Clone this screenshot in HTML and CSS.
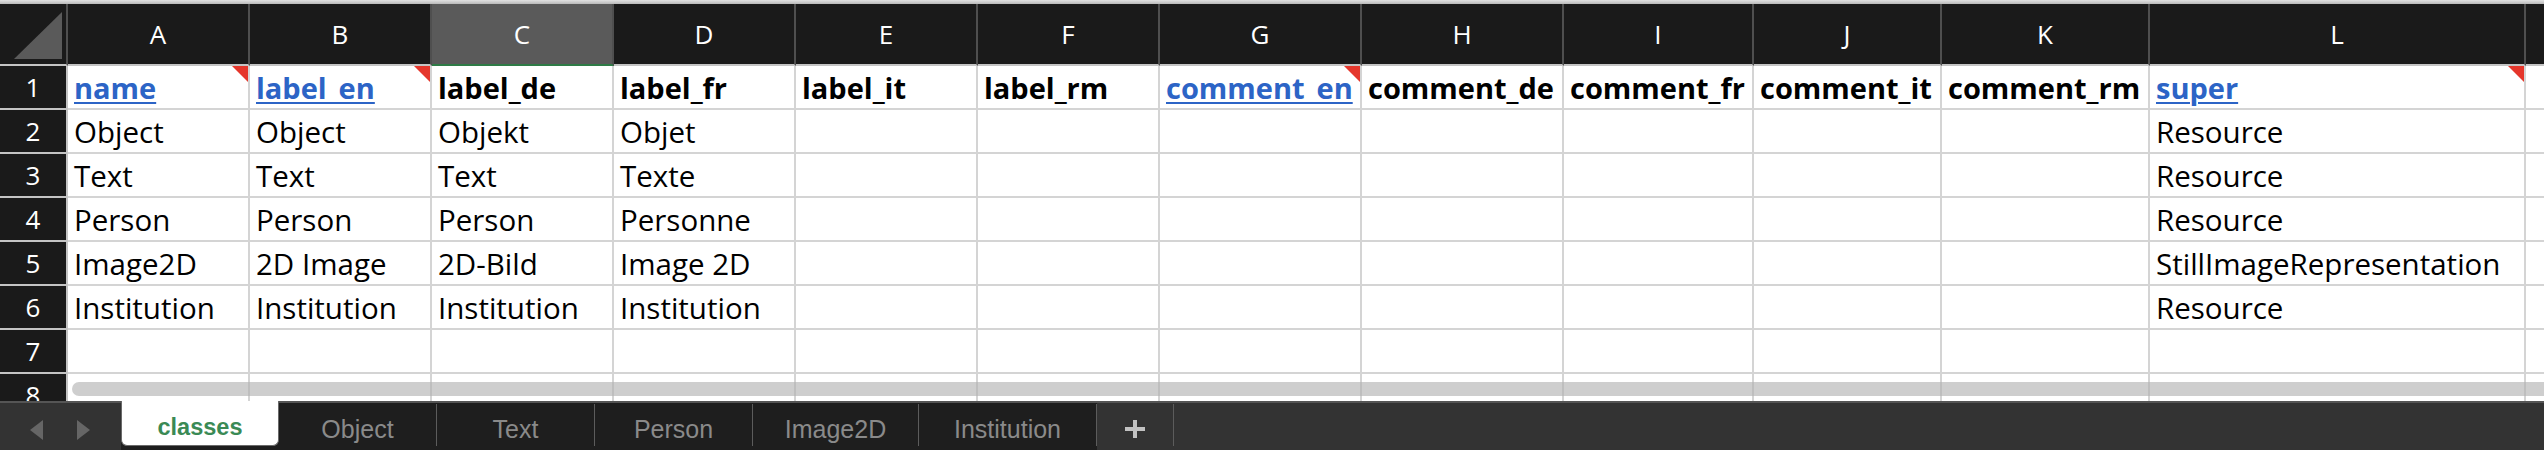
FILE: index.html
```html
<!DOCTYPE html>
<html lang="en">
<head>
<meta charset="utf-8">
<title>classes</title>
<link rel="stylesheet" href="styles.css">
</head>
<body>
<div class="app">
  <div class="topline"></div>
  <div class="sheet">
    <div class="grid">
      <div class="corner"><svg width="66" height="60" viewBox="0 0 66 60"><polygon points="14,55 62,55 62,8" fill="#5a5a5a"/></svg></div>
      <div class="colhead">A</div>
      <div class="colhead">B</div>
      <div class="colhead sel">C</div>
      <div class="colhead">D</div>
      <div class="colhead">E</div>
      <div class="colhead">F</div>
      <div class="colhead">G</div>
      <div class="colhead">H</div>
      <div class="colhead">I</div>
      <div class="colhead">J</div>
      <div class="colhead">K</div>
      <div class="colhead">L</div>
      <div class="colhead"></div>

      <div class="rowhead">1</div>
      <div class="cell hdr"><span class="link">name</span><i class="note"></i></div>
      <div class="cell hdr"><span class="link">label_en</span><i class="note"></i></div>
      <div class="cell hdr">label_de</div>
      <div class="cell hdr">label_fr</div>
      <div class="cell hdr">label_it</div>
      <div class="cell hdr">label_rm</div>
      <div class="cell hdr"><span class="link">comment_en</span><i class="note"></i></div>
      <div class="cell hdr">comment_de</div>
      <div class="cell hdr">comment_fr</div>
      <div class="cell hdr">comment_it</div>
      <div class="cell hdr">comment_rm</div>
      <div class="cell hdr"><span class="link">super</span><i class="note"></i></div>
      <div class="cell"></div>

      <div class="rowhead">2</div>
      <div class="cell">Object</div>
      <div class="cell">Object</div>
      <div class="cell">Objekt</div>
      <div class="cell">Objet</div>
      <div class="cell"></div><div class="cell"></div><div class="cell"></div><div class="cell"></div><div class="cell"></div><div class="cell"></div><div class="cell"></div>
      <div class="cell">Resource</div>
      <div class="cell"></div>

      <div class="rowhead">3</div>
      <div class="cell">Text</div>
      <div class="cell">Text</div>
      <div class="cell">Text</div>
      <div class="cell">Texte</div>
      <div class="cell"></div><div class="cell"></div><div class="cell"></div><div class="cell"></div><div class="cell"></div><div class="cell"></div><div class="cell"></div>
      <div class="cell">Resource</div>
      <div class="cell"></div>

      <div class="rowhead">4</div>
      <div class="cell">Person</div>
      <div class="cell">Person</div>
      <div class="cell">Person</div>
      <div class="cell">Personne</div>
      <div class="cell"></div><div class="cell"></div><div class="cell"></div><div class="cell"></div><div class="cell"></div><div class="cell"></div><div class="cell"></div>
      <div class="cell">Resource</div>
      <div class="cell"></div>

      <div class="rowhead">5</div>
      <div class="cell">Image2D</div>
      <div class="cell">2D Image</div>
      <div class="cell">2D-Bild</div>
      <div class="cell">Image 2D</div>
      <div class="cell"></div><div class="cell"></div><div class="cell"></div><div class="cell"></div><div class="cell"></div><div class="cell"></div><div class="cell"></div>
      <div class="cell">StillImageRepresentation</div>
      <div class="cell"></div>

      <div class="rowhead">6</div>
      <div class="cell">Institution</div>
      <div class="cell">Institution</div>
      <div class="cell">Institution</div>
      <div class="cell">Institution</div>
      <div class="cell"></div><div class="cell"></div><div class="cell"></div><div class="cell"></div><div class="cell"></div><div class="cell"></div><div class="cell"></div>
      <div class="cell">Resource</div>
      <div class="cell"></div>

      <div class="rowhead">7</div>
      <div class="cell"></div><div class="cell"></div><div class="cell"></div><div class="cell"></div><div class="cell"></div><div class="cell"></div><div class="cell"></div><div class="cell"></div><div class="cell"></div><div class="cell"></div><div class="cell"></div><div class="cell"></div><div class="cell"></div>

      <div class="rowhead">8</div>
      <div class="cell"></div><div class="cell"></div><div class="cell"></div><div class="cell"></div><div class="cell"></div><div class="cell"></div><div class="cell"></div><div class="cell"></div><div class="cell"></div><div class="cell"></div><div class="cell"></div><div class="cell"></div><div class="cell"></div>
    </div>
    <div class="hscroll"></div>
  </div>
  <div class="tabbar">
    <div class="nav">
      <svg width="14" height="20" viewBox="0 0 14 20"><polygon points="13,0 13,20 0,10" fill="#666"/></svg>
      <svg width="14" height="20" viewBox="0 0 14 20"><polygon points="1,0 1,20 14,10" fill="#666"/></svg>
    </div>
    <div class="tabs">
      <div class="tab active">classes</div>
      <div class="tab">Object</div>
      <div class="tab">Text</div>
      <div class="tab">Person</div>
      <div class="tab tab-img">Image2D</div>
      <div class="tab tab-inst">Institution</div>
    </div>
    <div class="add"><svg width="20" height="18" viewBox="0 0 20 18"><rect x="0" y="7" width="20" height="4" fill="#c2c2c2"/><rect x="8" y="0" width="4" height="18" fill="#c2c2c2"/></svg></div>
    <div class="rest"></div>
  </div>
</div>
</body>
</html>
```
FILE: styles.css
```css
* { box-sizing: border-box; }
html, body { margin: 0; padding: 0; }
body {
  width: 2544px;
  height: 450px;
  overflow: hidden;
  background: #ffffff;
  font-family: "Open Sans", "DejaVu Sans", sans-serif;
}
.app {
  display: flex;
  flex-direction: column;
  height: 450px;
}
.topline {
  height: 4px;
  flex: none;
  background: linear-gradient(#e2e2e2, #b9b9b9);
}
.sheet {
  position: relative;
  height: 397px;
  flex: none;
  overflow: hidden;
}
.grid {
  display: grid;
  grid-template-columns: 68px 182px 182px 182px 182px 182px 182px 202px 202px 190px 188px 208px 376px 200px;
  grid-template-rows: 62px repeat(8, 44px);
}
.corner {
  background: #1a1a1a;
  border-right: 2px solid #4f4f4f;
  border-bottom: 2px solid #c4c4c4;
}
.corner svg { display: block; }
.colhead {
  background: #1a1a1a;
  color: #ffffff;
  font-size: 26px;
  display: flex;
  align-items: center;
  justify-content: center;
  border-right: 2px solid #4f4f4f;
  border-bottom: 2px solid #c4c4c4;
}
.colhead.sel {
  background: #5a5a5a;
  border-bottom-color: #2e7b46;
}
.rowhead {
  background: #1a1a1a;
  color: #ffffff;
  font-size: 26px;
  display: flex;
  align-items: center;
  justify-content: center;
  border-right: 2px solid #c4c4c4;
  border-bottom: 2px solid #c4c4c4;
}
.cell {
  position: relative;
  display: flex;
  align-items: center;
  padding: 0 6px;
  font-size: 29.5px;
  color: #000000;
  white-space: nowrap;
  border-right: 2px solid #d4d4d4;
  border-bottom: 2px solid #d4d4d4;
}
.cell.hdr { font-weight: 700; font-size: 29px; }
.link {
  color: #2c64c6;
  text-decoration: underline;
  text-decoration-thickness: 2px;
  text-underline-offset: 3px;
}
.note {
  position: absolute;
  top: 0;
  right: 0;
  width: 16px;
  height: 16px;
  background: #e5362b;
  clip-path: polygon(0 0, 100% 0, 100% 100%);
}
.hscroll {
  position: absolute;
  top: 378px;
  left: 72px;
  right: 0;
  height: 14px;
  border-radius: 7px 0 0 7px;
  background: rgba(176, 176, 176, 0.62);
}
.tabbar {
  flex: none;
  height: 49px;
  display: flex;
  background: #333333;
  border-top: 2px solid #555555;
  font-family: "Liberation Sans", Arial, sans-serif;
  font-size: 25px;
}
.nav {
  width: 121px;
  flex: none;
  display: flex;
  align-items: center;
  padding: 7px 0 0 30px;
  gap: 32px;
}
.nav svg { display: block; }
.tabs {
  display: flex;
  background: #1e1e1e;
}
.tab {
  width: 158px;
  height: 42px;
  margin-top: 1px;
  display: flex;
  align-items: center;
  justify-content: center;
  padding-top: 8px;
  color: #8a8a8a;
  border-right: 1px solid #5c5c5c;
}
.tab.active {
  width: 158px;
  height: 45px;
  margin-top: -2px;
  background: #ffffff;
  color: #3a8a55;
  font-size: 23.5px;
  font-weight: 700;
  border: 1px solid #6a6a6a;
  border-top: none;
  border-radius: 0 0 6px 6px;
}
.tab-img { width: 166px; }
.tab-inst { width: 178px; }
.add {
  width: 77px;
  height: 42px;
  margin-top: 1px;
  display: flex;
  align-items: center;
  justify-content: center;
  padding-top: 8px;
  border-right: 1px solid #5c5c5c;
}
.add svg { display: block; }
.rest { flex: 1; }
```
